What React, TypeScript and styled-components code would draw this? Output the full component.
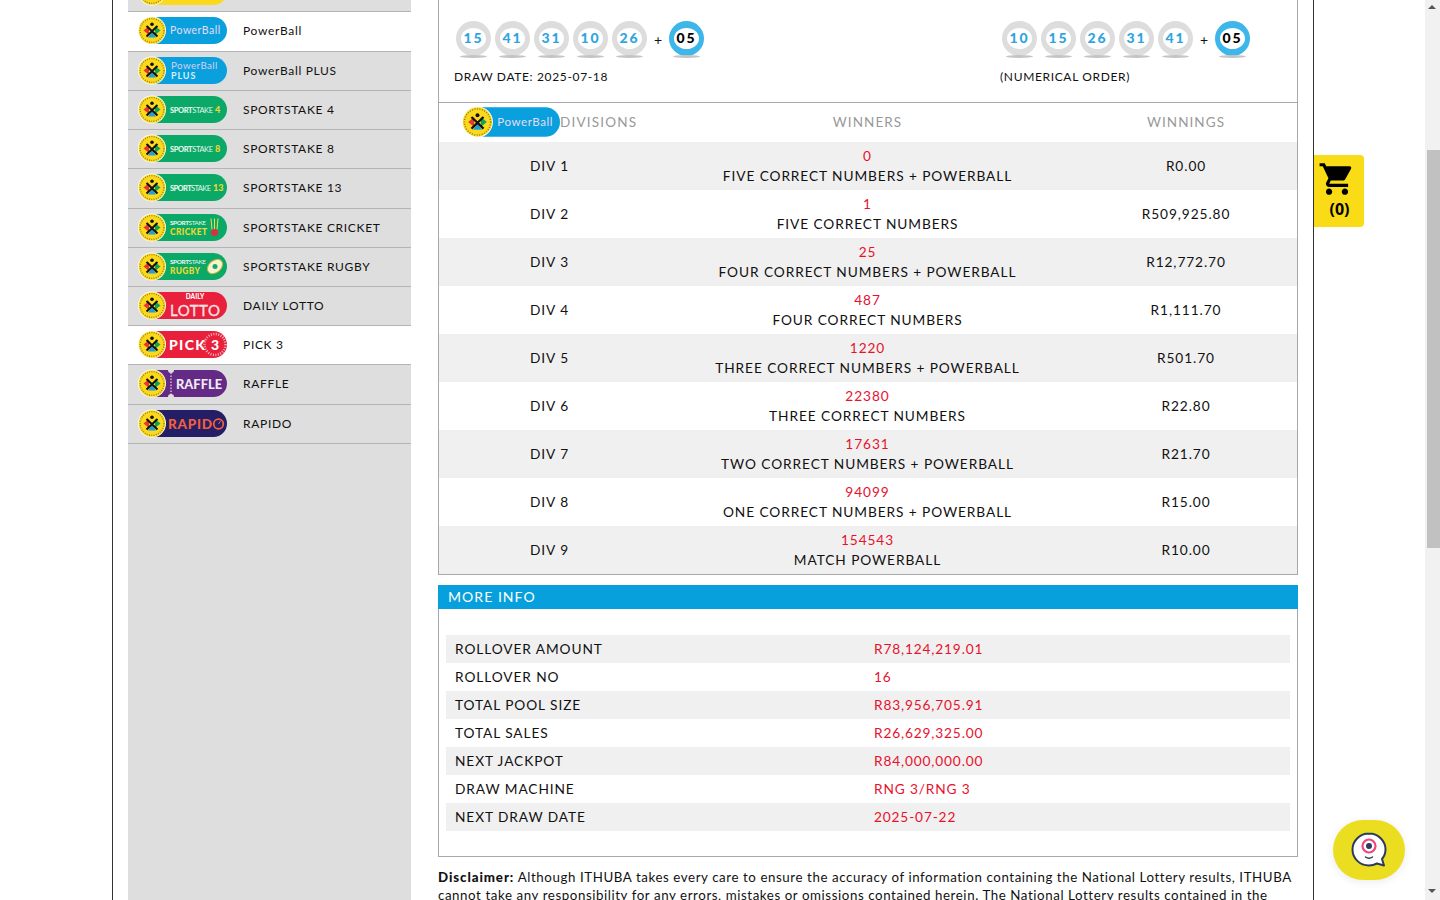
import React from "react";
import styled, { createGlobalStyle } from "styled-components";
import { MdShoppingCart } from "react-icons/md";

const Global = createGlobalStyle`
  html, body { margin: 0; padding: 0; height: 100%; overflow: hidden; background: #fff; }
  body { font-family: "Lato", "Liberation Sans", sans-serif; color: #111; }
`;

const Page = styled.div`
  height: 900px;
  overflow: hidden;
  padding-left: 112px;
`;
const Frame = styled.div`
  box-sizing: border-box;
  width: 1202px;
  height: 900px;
  border-left: 1px solid #333;
  border-right: 1px solid #333;
  padding-left: 15px;
  display: flex;
  gap: 27px;
  overflow: hidden;
`;
const Sidebar = styled.nav`
  flex: 0 0 283px;
  height: 900px;
  background: #dedede;
`;
const MenuRow = styled.div<{ $active?: boolean; $clipped?: boolean; $h: number }>`
  box-sizing: border-box;
  height: ${(p) => p.$h}px;
  margin-top: ${(p) => (p.$clipped ? "-27px" : "0")};
  display: flex;
  align-items: center;
  padding: 0 0 2px 9px;
  gap: 16px;
  background: ${(p) => (p.$active ? "#fff" : "#dedede")};
  border-bottom: 1px solid #b4b4b4;
`;
const MenuLabel = styled.span`
  font-size: 12px;
  letter-spacing: 0.68px;
  color: #111;
  white-space: nowrap;
`;
const Main = styled.main`
  flex: 0 0 860px;
`;
const ResultsBox = styled.section`
  box-sizing: border-box;
  width: 860px;
  border: 1px solid #a8a8a8;
  border-top: 0;
`;
const DrawHead = styled.div`
  display: grid;
  grid-template-columns: 546px 1fr;
  height: 102px;
  padding-left: 15px;
  border-bottom: 1px solid #a8a8a8;
`;
const DrawCol = styled.div`
  padding-top: 21px;
`;
const BallLine = styled.div`
  display: flex;
  align-items: flex-start;
  gap: 4px;
  padding-left: 2px;
  height: 38px;
`;
const Ball = styled.div<{ $bonus?: boolean }>`
  position: relative;
  box-sizing: border-box;
  width: 35px;
  height: 35px;
  border-radius: 50%;
  background: ${(p) => (p.$bonus ? "#3db6e9" : "#dddddd")};
  display: flex;
  align-items: center;
  justify-content: center;
  &::before {
    content: "";
    position: absolute;
    left: 5px;
    top: 7px;
    width: 25px;
    height: 21px;
    border-radius: 50%;
    background: #fff;
  }
  &::after {
    content: "";
    position: absolute;
    left: 4px;
    top: 34px;
    width: 27px;
    height: 3px;
    border-radius: 50%;
    background: #c4c4c4;
  }
`;
const BallNum = styled.span<{ $bonus?: boolean }>`
  position: relative;
  z-index: 1;
  font-size: 14px;
  font-weight: 900;
  letter-spacing: 1.9px;
  margin-left: 0;
  margin-top: -2px;
  color: ${(p) => (p.$bonus ? "#000" : "#2ea5e0")};
`;
const Plus = styled.span`
  font-size: 14px;
  width: 14px;
  line-height: 37px;
  text-align: center;
  color: #111;
`;
const DrawCaption = styled.div`
  margin-top: 9px;
  font-size: 12px;
  letter-spacing: 0.65px;
  line-height: 18px;
  color: #111;
`;
const TableHead = styled.div`
  display: grid;
  grid-template-columns: 221px 415px 222px;
  height: 39px;
  align-items: center;
  color: #999;
  font-size: 13.5px;
  letter-spacing: 1.05px;
  text-align: center;
`;
const HeadCell = styled.div`
  margin-top: -2px;
`;
const DivisionsCell = styled.div`
  display: flex;
  align-items: center;
  padding-left: 22px;
  margin-top: -2px;
  letter-spacing: 1.2px;
`;
const DivRow = styled.div<{ $odd: boolean }>`
  display: grid;
  grid-template-columns: 221px 415px 222px;
  height: 48px;
  align-items: center;
  text-align: center;
  background: ${(p) => (p.$odd ? "#f0f0f0" : "#fff")};
  font-size: 13.7px;
  letter-spacing: 0.92px;
  line-height: 20px;
  color: #111;
`;
const RedNum = styled.div`
  color: #e8112d;
`;
const InfoHead = styled.h2`
  margin: 10px 0 0;
  height: 24px;
  padding-left: 10px;
  background: #079fdc;
  color: #fff;
  font-size: 14px;
  font-weight: 400;
  letter-spacing: 1.05px;
  line-height: 24px;
`;
const InfoBox = styled.section`
  box-sizing: border-box;
  width: 860px;
  height: 248px;
  padding: 26px 7px 0;
  border: 1px solid #a8a8a8;
  border-top: 0;
`;
const InfoRow = styled.div<{ $odd: boolean }>`
  display: grid;
  grid-template-columns: 419px 1fr;
  box-sizing: border-box;
  height: 28px;
  align-items: center;
  padding: 0 0 2px 9px;
  background: ${(p) => (p.$odd ? "#f0f0f0" : "#fff")};
  font-size: 13.7px;
  letter-spacing: 0.92px;
  color: #111;
`;
const InfoValue = styled.span`
  color: #e8112d;
  letter-spacing: 0.85px;
`;
const Disclaimer = styled.p`
  margin: 11px 0 0;
  font-size: 13.3px;
  letter-spacing: 0.58px;
  line-height: 18px;
  color: #111;
  b { font-weight: 900; letter-spacing: 0.9px; margin-right: 0; }
`;
const CartTab = styled.div`
  position: fixed;
  left: 1314px;
  top: 155px;
  width: 50px;
  height: 72px;
  background: #f9dc15;
  border-radius: 0 4px 4px 0;
  display: flex;
  flex-direction: column;
  align-items: center;
  color: #000;
  padding: 5px 4px 0 0;
  box-sizing: border-box;
`;
const CartCount = styled.span`
  font-family: "Open Sans", sans-serif;
  font-weight: 700;
  font-size: 16px;
  line-height: 20px;
  margin: 1px 0 0 5px;
`;
const ChatButton = styled.div`
  position: fixed;
  left: 1333px;
  top: 820px;
  width: 72px;
  height: 60px;
  border-radius: 30px / 30px;
  background: #ebde20;
  box-shadow: 0 2px 10px rgba(0, 0, 0, 0.08);
  display: flex;
  align-items: center;
  justify-content: center;
`;
const ScrollTrack = styled.div`
  position: fixed;
  left: 1425px;
  top: 0;
  width: 15px;
  height: 900px;
  background: #f1f1f1;
`;
const ScrollThumb = styled.div`
  position: absolute;
  left: 2px;
  top: 150px;
  width: 13px;
  height: 398px;
  background: #c1c1c1;
`;
const ScrollArrow = styled.div<{ $down?: boolean }>`
  position: absolute;
  left: 3px;
  top: ${(p) => (p.$down ? "889px" : "5px")};
  width: 0;
  height: 0;
  border-left: 4px solid transparent;
  border-right: 4px solid transparent;
  ${(p) =>
    p.$down ? "border-top: 4px solid #555;" : "border-bottom: 4px solid #555;"}
`;

const Seal: React.FC = () => (
  <g>
    <circle cx="14" cy="14" r="14" fill="#fff" />
    <circle cx="14" cy="14" r="13.300" fill="#fcd91c" />
    <path d="M5.500 14 L11 9.500 L11 18.500 Z" fill="#e8372c" />
    <path d="M22.500 14 L17 9.500 L17 18.500 Z" fill="#11a35b" />
    <path d="M14 15.500 L18 21 H10 Z" fill="#1d9fdb" />
    <circle cx="14" cy="7.800" r="1.800" fill="#111" />
    <path d="M8.500 9.500 L19.500 20 M19.500 9.500 L8.500 20" stroke="#111" strokeWidth="2" />
    <circle cx="14" cy="14" r="11.900" fill="none" stroke="#333" strokeWidth="1.400" strokeDasharray="0.9 1.400" opacity="0.55" />
  </g>
);

type LogoProps = {
  bg: string;
  kind: string;
  large?: boolean;
};

const T: React.FC<React.SVGProps<SVGTextElement>> = ({ children, ...rest }) => (
  <text fontFamily="Lato, sans-serif" {...rest}>
    {children}
  </text>
);

const Sport: React.FC<{ y: number; size: number; len: number }> = ({ y, size, len }) => (
  <T x="32" y={y} fontSize={size} fill="#e4f4ea" textLength={len}>
    <tspan fontWeight="900">SPORT</tspan>
    <tspan fontWeight="400">STAKE</tspan>
  </T>
);

const LogoText: React.FC<{ kind: string }> = ({ kind }) => {
  switch (kind) {
    case "powerball":
      return <T x="32" y="17.500" fontSize="10.500" fill="#e4dcf6" letterSpacing=".5">PowerBall</T>;
    case "powerballplus":
      return (
        <>
          <T x="33" y="12.500" fontSize="9.800" fill="#d8d0f2" letterSpacing=".4">PowerBall</T>
          <T x="33" y="22.500" fontSize="9" fontWeight="700" fill="#d8f0fa" letterSpacing=".9">PLUS</T>
        </>
      );
    case "s4":
    case "s8":
    case "s13": {
      const n = kind.slice(1);
      return (
        <>
          <Sport y={17} size={7.500} len={n === "13" ? 41 : 43} />
          <T x={n === "13" ? 75 : 77} y="17.500" fontSize="9" fontWeight="900" fill="#f1d830">{n}</T>
        </>
      );
    }
    case "cricket":
      return (
        <>
          <Sport y={11.500} size={6.400} len={36} />
          <T x="32" y="21.500" fontSize="8.400" fontWeight="900" fill="#f1d830" textLength="37">CRICKET</T>
          <path d="M73 5 L74 16 M76.500 5 V16 M80 5 L79 16" stroke="#f3dc50" strokeWidth="1" />
          <circle cx="76.500" cy="19" r="3.600" fill="#d8323f" />
        </>
      );
    case "rugby":
      return (
        <>
          <Sport y={11.500} size={6.400} len={36} />
          <T x="32" y="21.500" fontSize="8.400" fontWeight="900" fill="#f1d830" textLength="30">RUGBY</T>
          <ellipse cx="77" cy="14" rx="8.500" ry="6" transform="rotate(-40 77 14)" fill="#f7f2d0" stroke="#c9b53a" />
          <circle cx="77" cy="14" r="2.500" fill="#0fa968" />
        </>
      );
    case "lotto":
      return (
        <>
          <T x="57" y="7.500" fontSize="6.500" fontWeight="900" fill="#fff" textAnchor="middle">DAILY</T>
          <T x="57" y="24" fontSize="15" fontWeight="400" fill="#f4d3d7" stroke="#fff" strokeWidth=".3" textAnchor="middle" textLength="50">LOTTO</T>
        </>
      );
    case "pick3":
      return (
        <>
          <circle cx="77" cy="14" r="10.500" fill="none" stroke="#f6b9c0" strokeWidth="2.500" strokeDasharray="1 1.500" />
          <T x="31" y="19" fontSize="14" fontWeight="900" fill="#fff" textLength="50">PICK 3</T>
        </>
      );
    case "raffle":
      return (
        <>
          <path d="M33 0 V28" stroke="#fff" strokeWidth="1" strokeDasharray="1.500 1.500" />
          <circle cx="33" cy="0.500" r="3" fill="#dedede" />
          <circle cx="33" cy="27.500" r="3" fill="#dedede" />
          <T x="38" y="19" fontSize="12.800" fontWeight="900" fill="#f0e9f6" textLength="46">RAFFLE</T>
        </>
      );
    case "rapido":
      return (
        <>
          <T x="30" y="19.500" fontSize="13.500" fontWeight="900" fill="#f2603c" textLength="44">RAPID</T>
          <circle cx="80.500" cy="14.500" r="4.800" fill="none" stroke="#f2603c" strokeWidth="1.800" />
          <path d="M80.500 14.500 L82.500 11.500" stroke="#f2603c" />
        </>
      );
    case "plus":
      return <T x="36" y="19" fontSize="14" fontWeight="900" fill="#111" letterSpacing="1">PLUS</T>;
    default:
      return null;
  }
};

const Logo: React.FC<LogoProps> = ({ bg, kind, large }) => (
  <svg width={large ? 99 : 90} height={large ? 32 : 29} viewBox="0 0 90 29" style={{ flex: "none" }}>
    <g transform="translate(1 0.500)">
      <rect x="6" y="0.500" width="83" height="27" rx="13.500" fill={bg} />
      <LogoText kind={kind} />
      <Seal />
    </g>
  </svg>
);

const menu = [
  { label: "", bg: "#fcd91c", kind: "plus", clipped: true, h: 39 },
  { label: "PowerBall", bg: "#0a9fdd", kind: "powerball", active: true, h: 40 },
  { label: "PowerBall PLUS", bg: "#0a9fdd", kind: "powerballplus", h: 39 },
  { label: "SPORTSTAKE 4", bg: "#0aa968", kind: "s4", h: 39 },
  { label: "SPORTSTAKE 8", bg: "#0aa968", kind: "s8", h: 39 },
  { label: "SPORTSTAKE 13", bg: "#0aa968", kind: "s13", h: 40 },
  { label: "SPORTSTAKE CRICKET", bg: "#0aa968", kind: "cricket", h: 39 },
  { label: "SPORTSTAKE RUGBY", bg: "#0aa968", kind: "rugby", h: 39 },
  { label: "DAILY LOTTO", bg: "#e8203c", kind: "lotto", h: 39 },
  { label: "PICK 3", bg: "#e8203c", kind: "pick3", active: true, h: 39 },
  { label: "RAFFLE", bg: "#642b86", kind: "raffle", h: 40 },
  { label: "RAPIDO", bg: "#241e66", kind: "rapido", h: 39 },
];

const divisions = [
  ["DIV 1", "0", "FIVE CORRECT NUMBERS + POWERBALL", "R0.00"],
  ["DIV 2", "1", "FIVE CORRECT NUMBERS", "R509,925.80"],
  ["DIV 3", "25", "FOUR CORRECT NUMBERS + POWERBALL", "R12,772.70"],
  ["DIV 4", "487", "FOUR CORRECT NUMBERS", "R1,111.70"],
  ["DIV 5", "1220", "THREE CORRECT NUMBERS + POWERBALL", "R501.70"],
  ["DIV 6", "22380", "THREE CORRECT NUMBERS", "R22.80"],
  ["DIV 7", "17631", "TWO CORRECT NUMBERS + POWERBALL", "R21.70"],
  ["DIV 8", "94099", "ONE CORRECT NUMBERS + POWERBALL", "R15.00"],
  ["DIV 9", "154543", "MATCH POWERBALL", "R10.00"],
];

const info = [
  ["ROLLOVER AMOUNT", "R78,124,219.01"],
  ["ROLLOVER NO", "16"],
  ["TOTAL POOL SIZE", "R83,956,705.91"],
  ["TOTAL SALES", "R26,629,325.00"],
  ["NEXT JACKPOT", "R84,000,000.00"],
  ["DRAW MACHINE", "RNG 3/RNG 3"],
  ["NEXT DRAW DATE", "2025-07-22"],
];

const Balls: React.FC<{ nums: string[]; bonus: string }> = ({ nums, bonus }) => (
  <BallLine>
    {nums.map((n) => (
      <Ball key={n}>
        <BallNum>{n}</BallNum>
      </Ball>
    ))}
    <Plus>+</Plus>
    <Ball $bonus>
      <BallNum $bonus>{bonus}</BallNum>
    </Ball>
  </BallLine>
);

export default function App() {
  return (
    <>
      <Global />
      <Page>
        <Frame>
          <Sidebar>
            {menu.map((m) => (
              <MenuRow key={m.kind} $active={m.active} $clipped={m.clipped} $h={m.h}>
                <Logo bg={m.bg} kind={m.kind} />
                {m.label && <MenuLabel>{m.label}</MenuLabel>}
              </MenuRow>
            ))}
          </Sidebar>
          <Main>
            <ResultsBox>
              <DrawHead>
                <DrawCol>
                  <Balls nums={["15", "41", "31", "10", "26"]} bonus="05" />
                  <DrawCaption>DRAW DATE: 2025-07-18</DrawCaption>
                </DrawCol>
                <DrawCol>
                  <Balls nums={["10", "15", "26", "31", "41"]} bonus="05" />
                  <DrawCaption>(NUMERICAL ORDER)</DrawCaption>
                </DrawCol>
              </DrawHead>
              <TableHead>
                <DivisionsCell>
                  <Logo bg="#0a9fdd" kind="powerball" large />
                  DIVISIONS
                </DivisionsCell>
                <HeadCell>WINNERS</HeadCell>
                <HeadCell>WINNINGS</HeadCell>
              </TableHead>
              {divisions.map((d, i) => (
                <DivRow key={d[0]} $odd={i % 2 === 0}>
                  <div>{d[0]}</div>
                  <div>
                    <RedNum>{d[1]}</RedNum>
                    <div>{d[2]}</div>
                  </div>
                  <div>{d[3]}</div>
                </DivRow>
              ))}
            </ResultsBox>
            <InfoHead>MORE INFO</InfoHead>
            <InfoBox>
              {info.map((r, i) => (
                <InfoRow key={r[0]} $odd={i % 2 === 0}>
                  <span>{r[0]}</span>
                  <InfoValue>{r[1]}</InfoValue>
                </InfoRow>
              ))}
            </InfoBox>
            <Disclaimer>
              <b>Disclaimer:</b> Although ITHUBA takes every care to ensure the accuracy of information containing the National Lottery results, ITHUBA cannot take any responsibility for any errors, mistakes or omissions contained herein. The National Lottery results contained in the official draw record shall prevail.
            </Disclaimer>
          </Main>
        </Frame>
      </Page>
      <CartTab>
        <MdShoppingCart size={38} />
        <CartCount>(0)</CartCount>
      </CartTab>
      <ChatButton>
        <svg width="38" height="38" viewBox="0 0 38 38">
          <path d="M19 2.500 C9.900 2.500 2.500 9.700 2.500 18.500 C2.500 27.500 9.900 34.500 19 34.500 C22 34.500 24.500 33.800 27 32.500 L34 34.500 L32 28 C34.300 25.300 35.500 22 35.500 18.500 C35.500 9.700 28.100 2.500 19 2.500 Z" fill="#fff" stroke="#2c3a5e" strokeWidth="2" strokeLinejoin="round" />
          <circle cx="19" cy="15" r="6.500" fill="none" stroke="#f0467c" strokeWidth="2.200" />
          <circle cx="19" cy="15" r="3" fill="#2c3a5e" />
          <path d="M15.500 26 Q19 28.500 22.500 26" fill="none" stroke="#2c3a5e" strokeWidth="1.500" strokeLinecap="round" />
        </svg>
      </ChatButton>
      <ScrollTrack>
        <ScrollArrow />
        <ScrollThumb />
        <ScrollArrow $down />
      </ScrollTrack>
    </>
  );
}
